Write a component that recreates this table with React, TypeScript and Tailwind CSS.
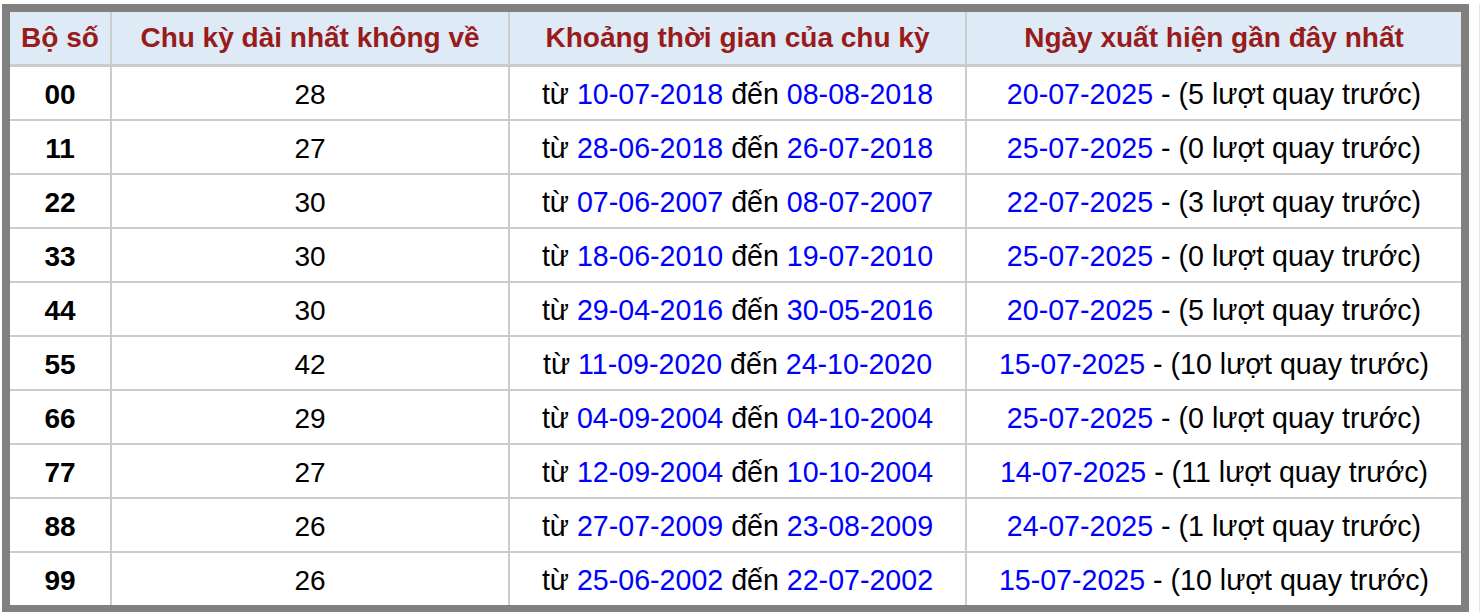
const rows = [
  { bo: '00', len: 28, from: '10-07-2018', to: '08-08-2018', last: '20-07-2025', ago: 5 },
  { bo: '11', len: 27, from: '28-06-2018', to: '26-07-2018', last: '25-07-2025', ago: 0 },
  { bo: '22', len: 30, from: '07-06-2007', to: '08-07-2007', last: '22-07-2025', ago: 3 },
  { bo: '33', len: 30, from: '18-06-2010', to: '19-07-2010', last: '25-07-2025', ago: 0 },
  { bo: '44', len: 30, from: '29-04-2016', to: '30-05-2016', last: '20-07-2025', ago: 5 },
  { bo: '55', len: 42, from: '11-09-2020', to: '24-10-2020', last: '15-07-2025', ago: 10 },
  { bo: '66', len: 29, from: '04-09-2004', to: '04-10-2004', last: '25-07-2025', ago: 0 },
  { bo: '77', len: 27, from: '12-09-2004', to: '10-10-2004', last: '14-07-2025', ago: 11 },
  { bo: '88', len: 26, from: '27-07-2009', to: '23-08-2009', last: '24-07-2025', ago: 1 },
  { bo: '99', len: 26, from: '25-06-2002', to: '22-07-2002', last: '15-07-2025', ago: 10 },
];

const cols = 'grid grid-cols-[100px_396px_455px_494px] gap-x-[2px]';
const cell = 'flex items-center justify-center bg-white pt-[3px] whitespace-pre';

export default function App() {
  return (
    <div className="flex h-[612px] w-[1480px] bg-white pl-[2px] pt-[4px] font-['Liberation_Sans',Arial,sans-serif] text-[28px] overflow-hidden">
      <div className="w-[1467px] self-start border-8 border-[#808080] bg-[#cccccc]">
        {/* header */}
        <div className={`${cols} h-[52px] font-bold text-[#991b1b]`}>
          <div className="flex items-center justify-center bg-[#deebf7]">Bộ số</div>
          <div className="flex items-center justify-center bg-[#deebf7]">Chu kỳ dài nhất không về</div>
          <div className="flex items-center justify-center bg-[#deebf7]">Khoảng thời gian của chu kỳ</div>
          <div className="flex items-center justify-center bg-[#deebf7]">Ngày xuất hiện gần đây nhất</div>
        </div>

        {/* rows */}
        <div className="mt-[3px] flex flex-col gap-y-[2px]">
          {rows.map((r) => (
            <div key={r.bo} className={`${cols} h-[52px] text-black`}>
              <div className={`${cell} font-bold`}>{r.bo}</div>
              <div className={cell}>{r.len}</div>
              <div className={`${cell} text-[28.6px]`}>
                từ <span className="text-[#0000ff]">{r.from}</span> đến <span className="text-[#0000ff]">{r.to}</span>
              </div>
              <div className={`${cell} text-[28.6px]`}>
                <span className="text-[#0000ff]">{r.last}</span> - ({r.ago} lượt quay trước)
              </div>
            </div>
          ))}
        </div>
      </div>
      <div className="ml-auto h-full w-px bg-[#e6e6e6]" />
    </div>
  );
}
